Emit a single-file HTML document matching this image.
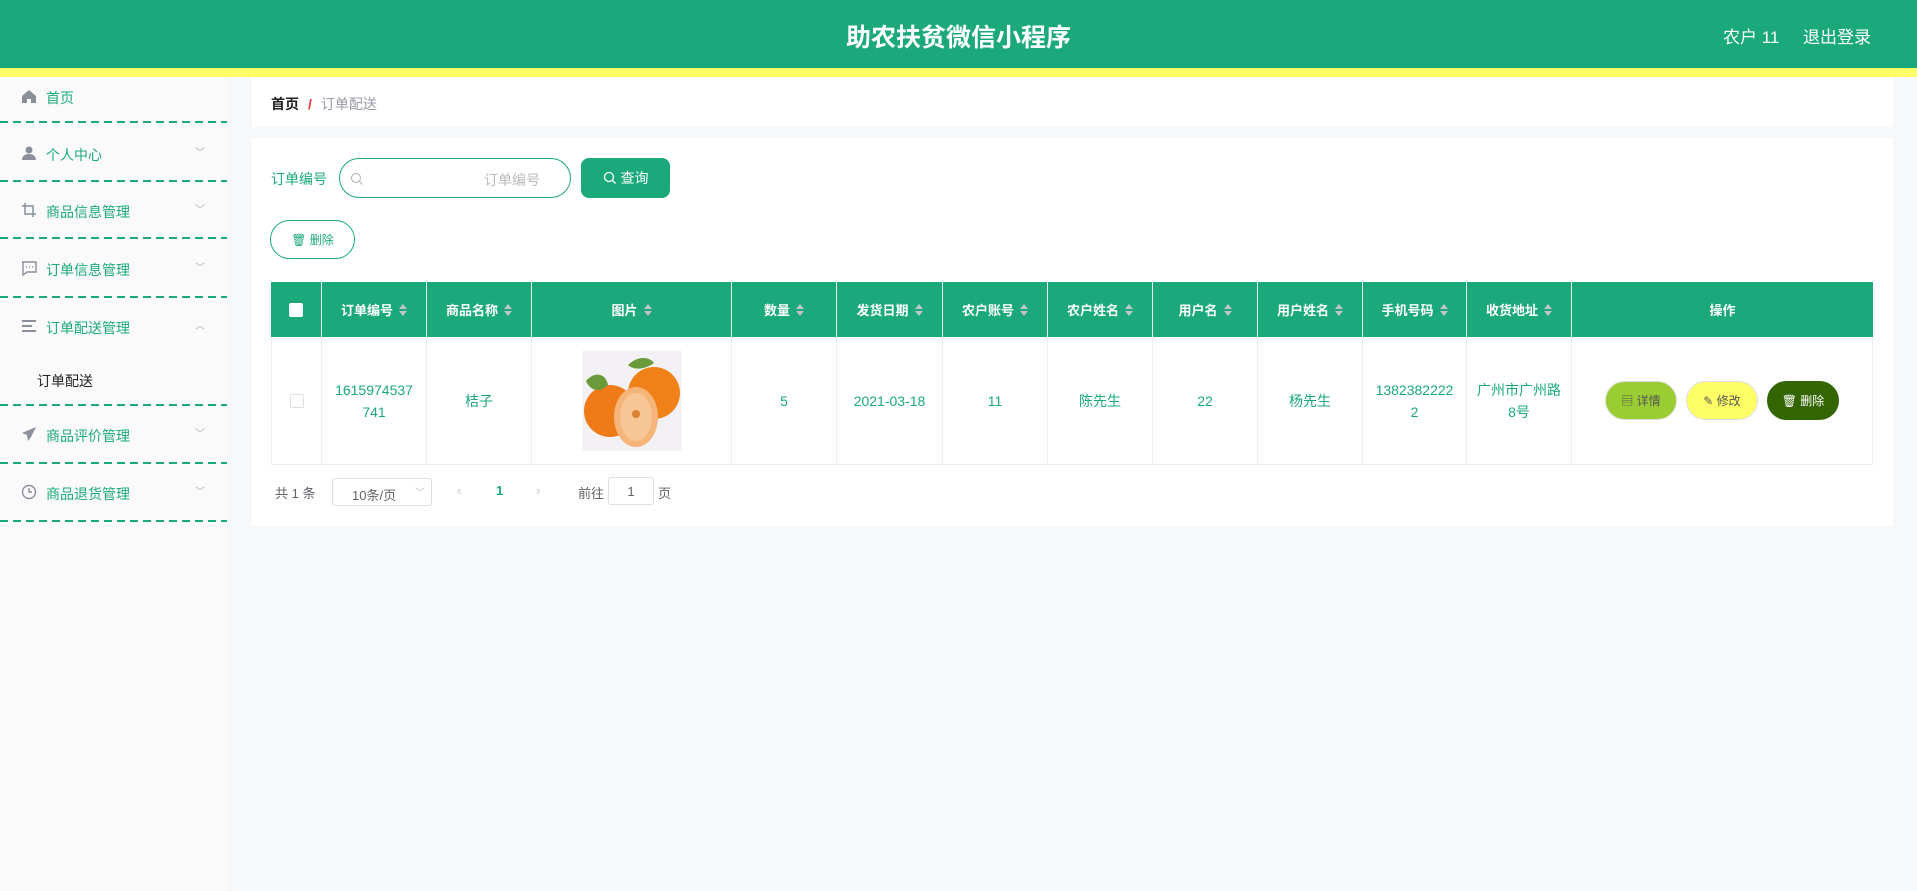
<!DOCTYPE html>
<html><head><meta charset="utf-8"><style>
*{box-sizing:border-box;margin:0;padding:0}
body{width:1917px;height:891px;background:#f7f8fa;font-family:"Liberation Sans","Noto Sans CJK SC",sans-serif;position:relative;overflow:hidden}
.hdr{position:absolute;left:0;top:0;width:1917px;height:68px;background:#1ba97b}
.hdr .t{position:absolute;left:0;right:0;top:18px;text-align:center;color:#fff;font-size:25px;font-weight:bold}
.hdr .u{position:absolute;right:46px;top:23px;color:#fff;font-size:17px}
.yl{position:absolute;left:0;top:68px;width:1917px;height:9px;background:#ffff66}
.side{position:absolute;left:0;top:77px;width:227px;height:814px;background:#fafafa}
.mi{position:absolute;left:0;width:227px;font-size:14px;color:#1ba97b}
.mi .ic{position:absolute;left:21px;top:0;width:16px;height:16px}
.mi .tx{position:absolute;left:46px;top:0}
.mi .ar{position:absolute;left:195px;top:-1px;color:#aaa;font-size:10px}
.dv{position:absolute;left:0;width:227px;height:2px;background:repeating-linear-gradient(90deg,#1ba97b 0 8px,transparent 8px 13px)}
.box{position:absolute;background:#fff}
.th{position:absolute;top:282px;height:55px;background:#1ba97b;color:#fff;font-size:13px;font-weight:bold;display:flex;align-items:center;justify-content:center;border-right:1px solid #e8f5ef}
.td{position:absolute;top:337px;height:128px;border-right:1px solid #ebeef5;border-bottom:1px solid #ebeef5;color:#1ba97b;font-size:14px;display:flex;align-items:center;justify-content:center;text-align:center;line-height:22px}
.srt{display:inline-block;margin-left:6px;width:8px;height:14px;position:relative;vertical-align:middle}
.srt:before{content:"";position:absolute;left:0;top:1px;border:4px solid transparent;border-bottom:5px solid #c0c4cc;border-top:0}
.srt:after{content:"";position:absolute;left:0;top:8px;border:4px solid transparent;border-top:5px solid #c0c4cc;border-bottom:0}
.btn{position:absolute;top:381px;width:72px;height:39px;border-radius:20px;font-size:12px;display:flex;align-items:center;justify-content:center;border:1px solid #ddd}
</style></head><body>
<div class="hdr"><div class="t">助农扶贫微信小程序</div><div class="u">农户 11&nbsp;&nbsp;&nbsp;&nbsp;&nbsp;退出登录</div></div>
<div class="yl"></div>
<div class="side">
<div class="mi" style="top:11px"><svg class="ic" viewBox="0 0 16 16"><path d="M1 8L8 2l7 6v7h-5v-4H6v4H1z" fill="#8a8f99"/></svg><span class="tx">首页</span></div>
<div class="dv" style="top:44px"></div>
<div class="mi" style="top:68px"><svg class="ic" viewBox="0 0 16 16"><circle cx="8" cy="5" r="3.5" fill="#8a8f99"/><path d="M1 15c0-4 3-6 7-6s7 2 7 6z" fill="#8a8f99"/></svg><span class="tx">个人中心</span><span class="ar">﹀</span></div>
<div class="dv" style="top:103px"></div>
<div class="mi" style="top:125px"><svg class="ic" viewBox="0 0 16 16"><path d="M4 1v11h11M1 4h11v11" fill="none" stroke="#8a8f99" stroke-width="1.5"/></svg><span class="tx">商品信息管理</span><span class="ar">﹀</span></div>
<div class="dv" style="top:160px"></div>
<div class="mi" style="top:183px"><svg class="ic" viewBox="0 0 16 16"><path d="M1 2h14v10H6l-4 3V2z" fill="none" stroke="#8a8f99" stroke-width="1.4"/><path d="M5 7h1M8 7h1M11 7h1" stroke="#8a8f99" stroke-width="1.4"/></svg><span class="tx">订单信息管理</span><span class="ar">﹀</span></div>
<div class="dv" style="top:219px"></div>
<div class="mi" style="top:241px"><svg class="ic" viewBox="0 0 16 16"><path d="M1 3h14M1 8h10M1 13h14" stroke="#8a8f99" stroke-width="2"/></svg><span class="tx">订单配送管理</span><span class="ar">︿</span></div>
<div class="mi" style="top:294px;color:#222"><span class="tx" style="left:37px">订单配送</span></div>
<div class="dv" style="top:327px"></div>
<div class="mi" style="top:349px"><svg class="ic" viewBox="0 0 16 16"><path d="M15 1L1 7l5 2 1 6 3-4 5-10z" fill="#8a8f99"/></svg><span class="tx">商品评价管理</span><span class="ar">﹀</span></div>
<div class="dv" style="top:385px"></div>
<div class="mi" style="top:407px"><svg class="ic" viewBox="0 0 16 16"><circle cx="8" cy="8" r="6.5" fill="none" stroke="#8a8f99" stroke-width="1.4"/><path d="M8 4v4h3" fill="none" stroke="#8a8f99" stroke-width="1.4"/></svg><span class="tx">商品退货管理</span><span class="ar">﹀</span></div>
<div class="dv" style="top:443px"></div>
</div>
<div class="box" style="left:252px;top:78px;width:1641px;height:49px"><div style="position:absolute;left:19px;top:16px;font-size:14px"><b style="color:#222">首页</b><span style="color:#e33;margin:0 9px;font-weight:bold">/</span><span style="color:#99a">订单配送</span></div></div>
<div class="box" style="left:252px;top:138px;width:1641px;height:388px"></div>
<div style="position:absolute;left:271px;top:169px;font-size:14px;color:#1ba97b">订单编号</div>
<div style="position:absolute;left:339px;top:158px;width:232px;height:40px;border:1px solid #1ba97b;border-radius:20px;background:#fff"><svg style="position:absolute;left:10px;top:13px" width="14" height="14" viewBox="0 0 14 14"><circle cx="6" cy="6" r="4.5" fill="none" stroke="#bbb" stroke-width="1.2"/><path d="M9.5 9.5L12.5 12.5" stroke="#bbb" stroke-width="1.2"/></svg><span style="position:absolute;left:144px;top:11px;color:#bbb;font-size:14px">订单编号</span></div>
<div style="position:absolute;left:581px;top:158px;width:89px;height:40px;border-radius:8px;background:#1ba97b;color:#fff;font-size:14px;display:flex;align-items:center;justify-content:center"><svg width="14" height="14" viewBox="0 0 14 14" style="margin-right:4px"><circle cx="6" cy="6" r="4.5" fill="none" stroke="#fff" stroke-width="1.3"/><path d="M9.5 9.5L12.5 12.5" stroke="#fff" stroke-width="1.3"/></svg>查询</div>
<div style="position:absolute;left:270px;top:220px;width:85px;height:39px;border:1px solid #1ba97b;border-radius:20px;background:#fff;color:#1ba97b;font-size:12px;display:flex;align-items:center;justify-content:center">🗑 删除</div>
<div class="th" style="left:271px;width:51px"><span style="width:14px;height:14px;background:#fff;border-radius:2px"></span></div>
<div class="th" style="left:322px;width:105px">订单编号<i class="srt"></i></div>
<div class="th" style="left:427px;width:105px">商品名称<i class="srt"></i></div>
<div class="th" style="left:532px;width:200px">图片<i class="srt"></i></div>
<div class="th" style="left:732px;width:105px">数量<i class="srt"></i></div>
<div class="th" style="left:837px;width:106px">发货日期<i class="srt"></i></div>
<div class="th" style="left:943px;width:105px">农户账号<i class="srt"></i></div>
<div class="th" style="left:1048px;width:105px">农户姓名<i class="srt"></i></div>
<div class="th" style="left:1153px;width:105px">用户名<i class="srt"></i></div>
<div class="th" style="left:1258px;width:105px">用户姓名<i class="srt"></i></div>
<div class="th" style="left:1363px;width:104px">手机号码<i class="srt"></i></div>
<div class="th" style="left:1467px;width:105px">收货地址<i class="srt"></i></div>
<div class="th" style="left:1572px;width:301px;border-right:0">操作</div>
<div class="td" style="left:271px;width:51px;border-left:1px solid #ebeef5"><span style="width:14px;height:14px;border:1px solid #dcdfe6;border-radius:2px"></span></div>
<div class="td" style="left:322px;width:105px">1615974537<br>741</div>
<div class="td" style="left:427px;width:105px">桔子</div>
<div class="td" style="left:532px;width:200px"><svg width="100" height="100" viewBox="0 0 100 100"><rect width="100" height="100" fill="#f3f1f3"/><circle cx="72" cy="42" r="26" fill="#f08018"/><circle cx="28" cy="60" r="26" fill="#ee7a18"/><path d="M4 30c8-10 20-8 22 4-8 8-18 6-22-4z M46 14c10-10 22-8 26-2-8 6-20 8-26 2z" fill="#6a9a3a"/><ellipse cx="54" cy="66" rx="22" ry="30" fill="#f5b57a"/><ellipse cx="54" cy="66" rx="16" ry="24" fill="#f8c596"/><circle cx="54" cy="63" r="4" fill="#d9822f"/></svg></div>
<div class="td" style="left:732px;width:105px">5</div>
<div class="td" style="left:837px;width:106px">2021-03-18</div>
<div class="td" style="left:943px;width:105px">11</div>
<div class="td" style="left:1048px;width:105px">陈先生</div>
<div class="td" style="left:1153px;width:105px">22</div>
<div class="td" style="left:1258px;width:105px">杨先生</div>
<div class="td" style="left:1363px;width:104px">1382382222<br>2</div>
<div class="td" style="left:1467px;width:105px">广州市广州路<br>8号</div>
<div class="td" style="left:1572px;width:301px"></div>
<div class="btn" style="left:1605px;background:#9acd32;color:#555">▤ 详情</div>
<div class="btn" style="left:1686px;background:#ffff66;color:#555">✎ 修改</div>
<div class="btn" style="left:1767px;background:#336600;color:#fff;border-color:#336600">🗑 删除</div>
<div style="position:absolute;left:275px;top:483px;font-size:13px;color:#606266">共 1 条</div>
<div style="position:absolute;left:332px;top:478px;width:100px;height:28px;border:1px solid #dcdfe6;border-radius:3px;font-size:13px;color:#606266;padding:6px 0 0 19px">10条/页<span style="position:absolute;right:6px;top:5px;color:#bbb;font-size:10px">﹀</span></div>
<div style="position:absolute;left:457px;top:483px;font-size:13px;color:#c0c4cc">‹</div>
<div style="position:absolute;left:496px;top:483px;font-size:13px;color:#1ba97b;font-weight:bold">1</div>
<div style="position:absolute;left:536px;top:483px;font-size:13px;color:#c0c4cc">›</div>
<div style="position:absolute;left:578px;top:483px;font-size:13px;color:#606266">前往</div>
<div style="position:absolute;left:608px;top:477px;width:46px;height:28px;border:1px solid #dcdfe6;border-radius:3px;font-size:13px;color:#606266;text-align:center;padding-top:6px">1</div>
<div style="position:absolute;left:658px;top:483px;font-size:13px;color:#606266">页</div>
</body></html>
